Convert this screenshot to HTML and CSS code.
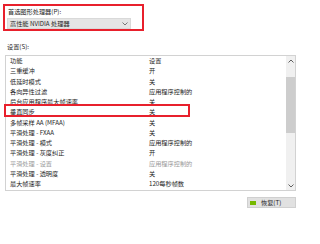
FILE: index.html
```html
<!DOCTYPE html>
<html>
<head>
<meta charset="utf-8">
<link rel="stylesheet" href="styles.css">
</head>
<body>
<div class="page">
  <div class="gpu-box">
    <div class="label">首选图形处理器(P):</div>
    <div class="select"><span>高性能 NVIDIA 处理器</span><svg class="chev" width="6" height="4" viewBox="0 0 6 4"><path d="M0.5 0.5 L3 3 L5.5 0.5" fill="none" stroke="#777" stroke-width="1"/></svg></div>
  </div>
  <div class="settings-label">设置(S):</div>
  <div class="list">
    <div class="rows">
      <div class="row head"><span class="c1">功能</span><span class="c2">设置</span></div>
      <div class="row"><span class="c1">三重缓冲</span><span class="c2">开</span></div>
      <div class="row"><span class="c1">低延时模式</span><span class="c2">关</span></div>
      <div class="row"><span class="c1">各向异性过滤</span><span class="c2">应用程序控制的</span></div>
      <div class="row"><span class="c1">后台应用程序最大帧速率</span><span class="c2">关</span></div>
      <div class="row"><span class="c1">垂直同步</span><span class="c2">关</span></div>
      <div class="row"><span class="c1">多帧采样 AA (MFAA)</span><span class="c2">关</span></div>
      <div class="row"><span class="c1">平滑处理 - FXAA</span><span class="c2">关</span></div>
      <div class="row"><span class="c1">平滑处理 - 模式</span><span class="c2">应用程序控制的</span></div>
      <div class="row"><span class="c1">平滑处理 - 灰度纠正</span><span class="c2">开</span></div>
      <div class="row dim"><span class="c1">平滑处理 - 设置</span><span class="c2">应用程序控制的</span></div>
      <div class="row"><span class="c1">平滑处理 - 透明度</span><span class="c2">关</span></div>
      <div class="row"><span class="c1">最大帧速率</span><span class="c2">120每秒帧数</span></div>
    </div>
    <div class="scrollbar">
      <div class="arrow up"><svg width="6" height="4" viewBox="0 0 6 4"><path d="M0.5 3.5 L3 1 L5.5 3.5" fill="none" stroke="#606060" stroke-width="1"/></svg></div>
      <div class="gap"></div>
      <div class="thumb"></div>
      <div class="track"></div>
      <div class="arrow down"><svg width="6" height="4" viewBox="0 0 6 4"><path d="M0.5 0.5 L3 3 L5.5 0.5" fill="none" stroke="#606060" stroke-width="1"/></svg></div>
    </div>
    <div class="highlight"></div>
  </div>
  <div class="actions">
    <div class="btn"><span class="nv"></span><span>恢复(T)</span></div>
  </div>
</div>
</body>
</html>
```
FILE: styles.css
```css
html, body {
  margin: 0;
  padding: 0;
  background: #ffffff;
}
body {
  width: 320px;
  height: 244px;
  overflow: hidden;
  font-family: "Noto Sans CJK SC", "Noto Sans", sans-serif;
  font-size: 6.2px;
  color: #1e1e1e;
}
.page {
  padding: 4px 0 0 3px;
}
.gpu-box {
  width: 137px;
  height: 23px;
  border: 2px solid #e8202c;
  padding: 0;
}
.label {
  height: 11px;
  line-height: 10px;
  padding: 0 0 0 3px;
  box-sizing: border-box;
  margin-top: 1px;
}
.select {
  margin: 0 0 0 2px;
  width: 124px;
  height: 11px;
  background: #e5e5e5;
  border: 1px solid #d9d9d9;
  box-sizing: border-box;
  display: flex;
  align-items: center;
  justify-content: space-between;
  padding: 0 2px 0 2px;
  line-height: 10px;
}
.chev {
  display: block;
}
.settings-label {
  margin: 11px 0 0 4px;
  line-height: 10px;
  height: 10px;
}
.list {
  position: relative;
  margin: 3px 0 0 2px;
  width: 291px;
  height: 136px;
  border: 1px solid #d2d2d2;
  box-sizing: border-box;
  display: flex;
}
.rows {
  flex: 1;
  padding-top: 0;
}
.row {
  display: flex;
  height: 10.25px;
  line-height: 10px;
  white-space: nowrap;
}
.c1 {
  width: 139px;
  padding-left: 4px;
  flex: none;
}
.c2 {
  flex: 1;
}
.dim {
  color: #9a9a9a;
}
.scrollbar {
  width: 9px;
  flex: none;
  display: flex;
  flex-direction: column;
  background: #f0f0f0;
}
.arrow {
  height: 9px;
  display: flex;
  align-items: center;
  justify-content: center;
  flex: none;
}
.gap {
  height: 12px;
  flex: none;
}
.thumb {
  height: 56px;
  background: #cdcdcd;
  flex: none;
}
.track {
  flex: 1;
}
.highlight {
  position: absolute;
  left: -2px;
  top: 48px;
  width: 186px;
  height: 13px;
  border: 2px solid #e8202c;
  box-sizing: border-box;
}
.actions {
  display: flex;
  justify-content: flex-end;
  width: 293px;
  margin-top: 6px;
}
.btn {
  width: 49px;
  height: 11px;
  background: #e1e1e1;
  border: 1px solid #d0d0d0;
  box-sizing: border-box;
  display: flex;
  align-items: center;
  line-height: 9px;
  padding-left: 2px;
}
.nv {
  width: 6px;
  height: 4px;
  background: #76b900;
  margin-right: 5px;
}
```
